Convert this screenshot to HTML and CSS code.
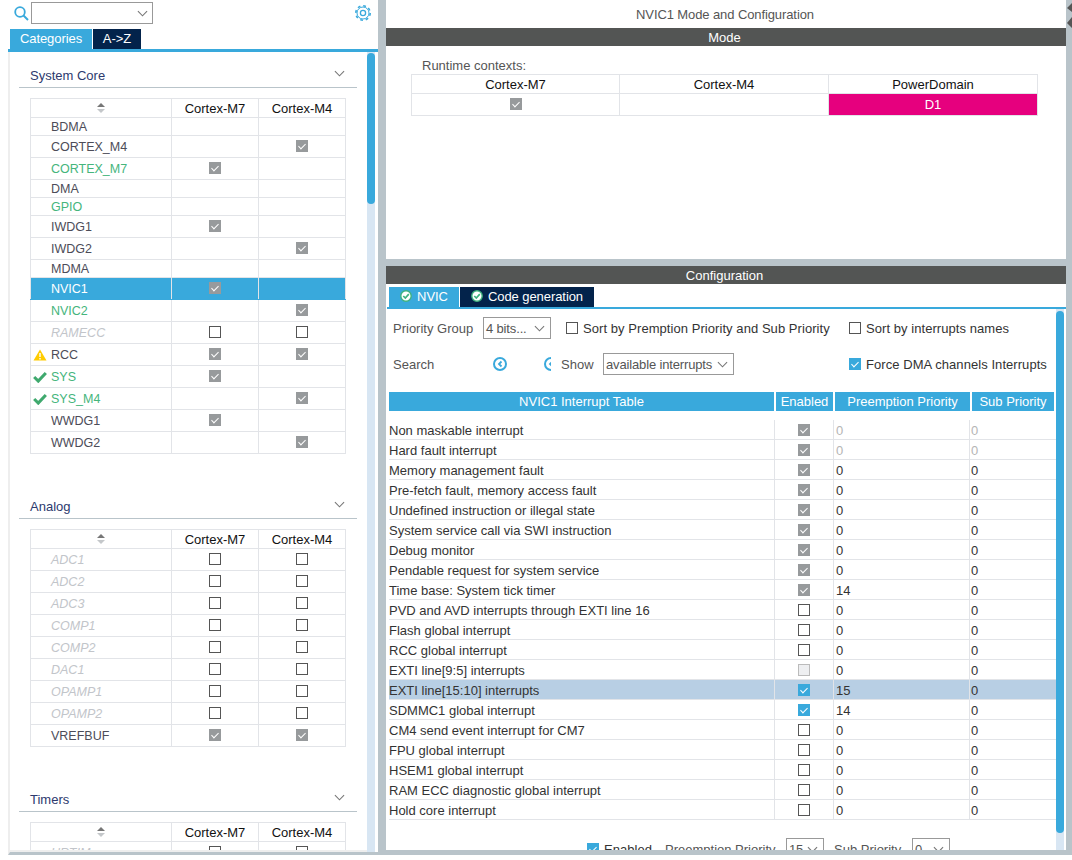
FILE: index.html
```html
<!DOCTYPE html>
<html lang="en">
<head>
    <meta charset="UTF-8">
    <title>NVIC1 Mode and Configuration</title>
    <link rel="stylesheet" href="styles.css">
</head>
<body>
    <svg class="defs" width="0" height="0">
        <symbol id="chev" viewBox="0 0 12 7"><path d="M1 1l5 5 5-5" fill="none" stroke="currentColor" stroke-width="1.2"/></symbol>
        <symbol id="sort" viewBox="0 0 8 10"><path d="M4 0l4 4H0z" fill="#777"/><path d="M4 10l4-4H0z" fill="#c4c7ca"/></symbol>
        <symbol id="ok" viewBox="0 0 12 10"><path d="M1 5l3.5 3.5L11 1.500" fill="none" stroke="#3fa96e" stroke-width="2.6"/></symbol>
        <symbol id="back" viewBox="0 0 14 14"><circle cx="7" cy="7" r="6" fill="none" stroke="#39a9dc" stroke-width="2"/><path d="M8.500 4.500L6 7l2.500 2.500" fill="none" stroke="#39a9dc" stroke-width="1.800"/></symbol>
        <symbol id="tabok" viewBox="0 0 12 12"><circle cx="6" cy="6" r="5.200" fill="#fff" stroke="#3fb27f" stroke-width="1.400"/><path d="M3.300 6l2 2 3.500-3.800" fill="none" stroke="#3fb27f" stroke-width="1.700"/></symbol>
    </svg>

    <div class="app">
        <div class="left">
            <div class="search-row">
                <svg class="search-icon" width="15" height="15" viewBox="0 0 15 15"><circle cx="6" cy="6" r="4.800" fill="none" stroke="#39a9dc" stroke-width="1.800"/><path d="M9.500 9.500l4.500 4.500" stroke="#39a9dc" stroke-width="2"/></svg>
                <div class="sel sel-search"><span></span><svg class="chev"><use href="#chev"/></svg></div>
                <svg class="gear" width="18" height="18" viewBox="0 0 18 18">
                    <circle cx="9" cy="9" r="7.200" fill="none" stroke="#39a9dc" stroke-width="1.600" stroke-dasharray="2.800 2.850"/>
                    <circle cx="9" cy="9" r="6" fill="none" stroke="#39a9dc" stroke-width="1"/>
                    <circle cx="9" cy="9" r="2.600" fill="none" stroke="#39a9dc" stroke-width="1.300"/>
                </svg>
            </div>
            <div class="cat-tabs">
                <div class="tab tab-on tab-cat">Categories</div>
                <div class="tab tab-off tab-az">A-&gt;Z</div>
            </div>
            <div class="left-body">
                <div class="sections">
                    <div class="section">
                        <div class="sec-head"><span>System Core</span><svg class="chev"><use href="#chev"/></svg></div>
                        <table class="ip-table">
                            <tr class="head"><th><svg class="sort"><use href="#sort"/></svg></th><th>Cortex-M7</th><th>Cortex-M4</th></tr>
                            <tr class="short"><td class="name">BDMA</td><td></td><td></td></tr>
                            <tr><td class="name">CORTEX_M4</td><td></td><td><span class="chk on"></span></td></tr>
                            <tr><td class="name green">CORTEX_M7</td><td><span class="chk on"></span></td><td></td></tr>
                            <tr class="short"><td class="name">DMA</td><td></td><td></td></tr>
                            <tr class="short"><td class="name green">GPIO</td><td></td><td></td></tr>
                            <tr><td class="name">IWDG1</td><td><span class="chk on"></span></td><td></td></tr>
                            <tr><td class="name">IWDG2</td><td></td><td><span class="chk on"></span></td></tr>
                            <tr class="short"><td class="name">MDMA</td><td></td><td></td></tr>
                            <tr class="picked"><td class="name">NVIC1</td><td><span class="chk on"></span></td><td></td></tr>
                            <tr><td class="name green">NVIC2</td><td></td><td><span class="chk on"></span></td></tr>
                            <tr><td class="name off">RAMECC</td><td><span class="chk"></span></td><td><span class="chk"></span></td></tr>
                            <tr><td class="name"><svg class="status" width="14" height="12" viewBox="0 0 14 12"><path d="M7 .5L13.500 11.500H.5z" fill="#fc0"/><path d="M7 4v4M7 9v1.500" stroke="#fff" stroke-width="1.400"/></svg>RCC</td><td><span class="chk on"></span></td><td><span class="chk on"></span></td></tr>
                            <tr><td class="name green"><svg class="status" width="14" height="12"><use href="#ok"/></svg>SYS</td><td><span class="chk on"></span></td><td></td></tr>
                            <tr><td class="name green"><svg class="status" width="14" height="12"><use href="#ok"/></svg>SYS_M4</td><td></td><td><span class="chk on"></span></td></tr>
                            <tr><td class="name">WWDG1</td><td><span class="chk on"></span></td><td></td></tr>
                            <tr><td class="name">WWDG2</td><td></td><td><span class="chk on"></span></td></tr>
                        </table>
                    </div>
                    <div class="section">
                        <div class="sec-head"><span>Analog</span><svg class="chev"><use href="#chev"/></svg></div>
                        <table class="ip-table">
                            <tr class="head"><th><svg class="sort"><use href="#sort"/></svg></th><th>Cortex-M7</th><th>Cortex-M4</th></tr>
                            <tr><td class="name off">ADC1</td><td><span class="chk"></span></td><td><span class="chk"></span></td></tr>
                            <tr><td class="name off">ADC2</td><td><span class="chk"></span></td><td><span class="chk"></span></td></tr>
                            <tr><td class="name off">ADC3</td><td><span class="chk"></span></td><td><span class="chk"></span></td></tr>
                            <tr><td class="name off">COMP1</td><td><span class="chk"></span></td><td><span class="chk"></span></td></tr>
                            <tr><td class="name off">COMP2</td><td><span class="chk"></span></td><td><span class="chk"></span></td></tr>
                            <tr><td class="name off">DAC1</td><td><span class="chk"></span></td><td><span class="chk"></span></td></tr>
                            <tr><td class="name off">OPAMP1</td><td><span class="chk"></span></td><td><span class="chk"></span></td></tr>
                            <tr><td class="name off">OPAMP2</td><td><span class="chk"></span></td><td><span class="chk"></span></td></tr>
                            <tr><td class="name">VREFBUF</td><td><span class="chk on"></span></td><td><span class="chk on"></span></td></tr>
                        </table>
                    </div>
                    <div class="section">
                        <div class="sec-head"><span>Timers</span><svg class="chev"><use href="#chev"/></svg></div>
                        <table class="ip-table">
                            <tr class="head"><th><svg class="sort"><use href="#sort"/></svg></th><th>Cortex-M7</th><th>Cortex-M4</th></tr>
                            <tr><td class="name off">HRTIM</td><td><span class="chk"></span></td><td><span class="chk"></span></td></tr>
                        </table>
                    </div>
                </div>
                <div class="scroll"><div class="thumb thumb-left"></div></div>
            </div>
        </div>

        <div class="right">
            <div class="mode">
                <div class="title">NVIC1 Mode and Configuration</div>
                <div class="bar">Mode</div>
                <div class="runtime-label">Runtime contexts:</div>
                <table class="ctx-table">
                    <tr class="ctx-head"><th>Cortex-M7</th><th>Cortex-M4</th><th>PowerDomain</th></tr>
                    <tr class="ctx-row"><td><span class="chk on"></span></td><td></td><td class="pink">D1</td></tr>
                </table>
            </div>

            <div class="config">
                <div class="bar">Configuration</div>
                <div class="conf-tabs">
                    <div class="tab tab-on tab-nvic"><svg class="tabok"><use href="#tabok"/></svg>NVIC</div>
                    <div class="tab tab-off tab-code"><svg class="tabok"><use href="#tabok"/></svg>Code generation</div>
                </div>
                <div class="panel">
                    <div class="panel-main">
                        <div class="opts opts-first">
                            <span class="lbl lbl-group">Priority Group</span>
                            <div class="sel sel-bits"><span>4 bits...</span><svg class="chev"><use href="#chev"/></svg></div>
                            <div class="opt opt-sort"><span class="chk"></span>Sort by Premption Priority and Sub Priority</div>
                            <div class="opt"><span class="chk"></span>Sort by interrupts names</div>
                        </div>
                        <div class="opts opts-second">
                            <span class="lbl lbl-search">Search</span>
                            <svg class="nav-icon" width="14" height="14"><use href="#back"/></svg>
                            <div class="nav-clip"><svg class="nav-next" width="14" height="14"><use href="#back"/></svg></div>
                            <span class="lbl lbl-show">Show</span>
                            <div class="sel sel-show"><span>available interrupts</span><svg class="chev"><use href="#chev"/></svg></div>
                            <div class="opt opt-force"><span class="chk blue"></span>Force DMA channels Interrupts</div>
                        </div>

                        <div class="irq-head">
                            <div>NVIC1 Interrupt Table</div>
                            <div>Enabled</div>
                            <div>Preemption Priority</div>
                            <div>Sub Priority</div>
                        </div>
                        <div class="irq-body">
                            <div class="irq-row faint"><div>Non maskable interrupt</div><div><span class="chk on"></span></div><div>0</div><div>0</div></div>
                            <div class="irq-row faint"><div>Hard fault interrupt</div><div><span class="chk on"></span></div><div>0</div><div>0</div></div>
                            <div class="irq-row"><div>Memory management fault</div><div><span class="chk on"></span></div><div>0</div><div>0</div></div>
                            <div class="irq-row"><div>Pre-fetch fault, memory access fault</div><div><span class="chk on"></span></div><div>0</div><div>0</div></div>
                            <div class="irq-row"><div>Undefined instruction or illegal state</div><div><span class="chk on"></span></div><div>0</div><div>0</div></div>
                            <div class="irq-row"><div>System service call via SWI instruction</div><div><span class="chk on"></span></div><div>0</div><div>0</div></div>
                            <div class="irq-row"><div>Debug monitor</div><div><span class="chk on"></span></div><div>0</div><div>0</div></div>
                            <div class="irq-row"><div>Pendable request for system service</div><div><span class="chk on"></span></div><div>0</div><div>0</div></div>
                            <div class="irq-row"><div>Time base: System tick timer</div><div><span class="chk on"></span></div><div>14</div><div>0</div></div>
                            <div class="irq-row"><div>PVD and AVD interrupts through EXTI line 16</div><div><span class="chk"></span></div><div>0</div><div>0</div></div>
                            <div class="irq-row"><div>Flash global interrupt</div><div><span class="chk"></span></div><div>0</div><div>0</div></div>
                            <div class="irq-row"><div>RCC global interrupt</div><div><span class="chk"></span></div><div>0</div><div>0</div></div>
                            <div class="irq-row"><div>EXTI line[9:5] interrupts</div><div><span class="chk dim"></span></div><div>0</div><div>0</div></div>
                            <div class="irq-row picked-row"><div>EXTI line[15:10] interrupts</div><div><span class="chk blue"></span></div><div>15</div><div>0</div></div>
                            <div class="irq-row"><div>SDMMC1 global interrupt</div><div><span class="chk blue"></span></div><div>14</div><div>0</div></div>
                            <div class="irq-row"><div>CM4 send event interrupt for CM7</div><div><span class="chk"></span></div><div>0</div><div>0</div></div>
                            <div class="irq-row"><div>FPU global interrupt</div><div><span class="chk"></span></div><div>0</div><div>0</div></div>
                            <div class="irq-row"><div>HSEM1 global interrupt</div><div><span class="chk"></span></div><div>0</div><div>0</div></div>
                            <div class="irq-row"><div>RAM ECC diagnostic global interrupt</div><div><span class="chk"></span></div><div>0</div><div>0</div></div>
                            <div class="irq-row"><div>Hold core interrupt</div><div><span class="chk"></span></div><div>0</div><div>0</div></div>
                        </div>

                        <div class="opts opts-bottom">
                            <div class="opt opt-enabled"><span class="chk blue"></span>Enabled</div>
                            <span class="lbl lbl-pre">Preemption Priority</span>
                            <div class="sel sel-small"><span>15</span><svg class="chev"><use href="#chev"/></svg></div>
                            <span class="lbl lbl-sub">Sub Priority</span>
                            <div class="sel sel-small"><span>0</span><svg class="chev"><use href="#chev"/></svg></div>
                        </div>
                    </div>
                    <div class="scroll scroll-right"><div class="thumb thumb-right"></div></div>
                </div>
            </div>
        </div>

        <div class="edge">
            <svg width="6" height="28" viewBox="0 0 6 28"><path d="M6 0L1 5l5 4zM6 14L1 20l5 5z" fill="#555"/></svg>
        </div>
    </div>
</body>
</html>
```

FILE: styles.css
```css
/* Page frame */
body {
    margin: 0;
    background-color: #fff;
    font-family: "Liberation Sans", Arial, sans-serif;
    font-size: 13px;
    color: #333;
}
.defs {
    position: absolute;
}
.app {
    display: flex;
    width: 1072px;
    height: 855px;
    overflow: hidden;
    background-color: #b9c4ca;
}
.edge {
    padding-top: 3px;
}

/* Left column */
.left {
    display: flex;
    flex-direction: column;
    width: 378px;
    flex-shrink: 0;
    background-color: #fff;
}
.search-row {
    display: flex;
    align-items: center;
    height: 26px;
    padding-left: 14px;
}
.search-icon {
    margin-right: 2px;
}
.gear {
    margin-left: 201px;
}
.sel {
    display: flex;
    align-items: center;
    justify-content: space-between;
    box-sizing: border-box;
    height: 22px;
    border: 1px solid #999;
    padding: 0 5px 0 2px;
    color: #555;
    letter-spacing: -0.15px;
    white-space: nowrap;
}
.sel-search {
    width: 122px;
    padding-right: 4px;
}
.chev {
    width: 11px;
    height: 7px;
    color: #777;
    flex-shrink: 0;
}
.cat-tabs {
    display: flex;
    height: 20px;
    margin-top: 3px;
    margin-left: 8px;
    padding-left: 2px;
    border-bottom: 3px solid #39a9dc;
}
.tab {
    display: flex;
    align-items: center;
    justify-content: center;
    box-sizing: border-box;
    padding-bottom: 2px;
    letter-spacing: -0.07px;
    color: #fff;
}
.tab-on {
    background-color: #39a9dc;
}
.tab-off {
    background-color: #03234b;
}
.tab-cat {
    width: 82px;
    margin-right: 1px;
}
.tab-az {
    width: 48px;
}
.left-body {
    display: flex;
    flex: 1;
    min-height: 0;
    margin-left: 8px;
    border-left: 2px solid #eee;
    border-bottom: 3px solid #b9c4ca;
}
.sections {
    flex: 1;
    overflow: hidden;
    border-bottom: 2px solid #eee;
}
.section {
    padding-left: 9px;
    padding-top: 14px;
    margin-bottom: 29px;
}
.sec-head {
    display: flex;
    justify-content: space-between;
    box-sizing: border-box;
    width: 338px;
    height: 22px;
    padding: 0 12px 0 11px;
    border-bottom: 1px solid #b9c4ca;
    color: #2d3a6e;
    line-height: 20px;
}
.sec-head .chev {
    margin-top: 4px;
}
.ip-table {
    width: 316px;
    margin: 10px 0 0 11px;
    border-collapse: collapse;
    table-layout: fixed;
}
.ip-table th,
.ip-table td {
    box-sizing: border-box;
    height: 22px;
    padding: 0;
    border: 1px solid #e2e4e8;
    text-align: center;
    font-weight: normal;
}
.ip-table th:first-child {
    width: 141px;
}
.ip-table th:nth-child(2) {
    width: 87px;
}
.ip-table .head th {
    height: 19px;
    color: #111;
}
.ip-table .short td {
    height: 18px;
}
.ip-table .name {
    padding-left: 20px;
    text-align: left;
    font-size: 12.5px;
    color: #4c4c58;
    white-space: nowrap;
}
.ip-table .green {
    color: #45b57c;
}
.ip-table .off {
    color: #c2c5ca;
    font-style: italic;
}
.ip-table .picked td {
    background-color: #39a9dc;
    color: #fff;
    border-top-color: #39a9dc;
    border-bottom-color: #39a9dc;
}
.sort {
    display: block;
    width: 8px;
    height: 10px;
    margin: 0 auto;
}
.status {
    margin-left: -18px;
    margin-right: 4px;
    vertical-align: -2px;
}

/* Checkboxes */
.chk {
    display: inline-block;
    position: relative;
    box-sizing: border-box;
    width: 12px;
    height: 12px;
    border: 1px solid #555;
    vertical-align: middle;
    background-color: #fff;
}
td > .chk {
    display: block;
    margin: 0 auto 1px;
}
.chk.on,
.chk.blue {
    border: none;
    background-color: #979a9c;
}
.chk.blue {
    background-color: #39a9dc;
}
.chk.dim {
    border-color: #bbb;
    background-color: #eeeff1;
}
.chk.on::after,
.chk.blue::after {
    content: "";
    position: absolute;
    left: 4px;
    top: 2px;
    width: 3px;
    height: 6px;
    border-right: 1.5px solid #fff;
    border-bottom: 1.5px solid #fff;
    transform: rotate(45deg);
}

/* Scrollbars */
.scroll {
    width: 8px;
    margin-right: 3px;
    padding-top: 1px;
    background-color: #d8e6f3;
    flex-shrink: 0;
}
.thumb {
    background-color: #39a9dc;
    border-radius: 4px;
}
.thumb-left {
    height: 151px;
}

/* Right column */
.right {
    display: flex;
    flex-direction: column;
    width: 680px;
    flex-shrink: 0;
    margin-left: 8px;
}
.mode {
    height: 259px;
    background-color: #fff;
}
.title {
    height: 28px;
    padding-right: 2px;
    line-height: 29px;
    letter-spacing: -0.1px;
    text-align: center;
    color: #555;
}
.bar {
    height: 18px;
    padding-right: 3px;
    line-height: 19px;
    background-color: #535554;
    color: #fff;
    text-align: center;
}
.runtime-label {
    margin: 11px 0 0 36px;
    height: 17px;
    line-height: 17px;
    color: #555;
}
.ctx-table {
    width: 627px;
    margin-left: 25px;
    border-collapse: collapse;
    table-layout: fixed;
}
.ctx-table th,
.ctx-table td {
    box-sizing: border-box;
    padding: 0;
    border: 1px solid #e2e4e8;
    text-align: center;
    font-weight: normal;
}
.ctx-table th:first-child {
    width: 208px;
}
.ctx-table th:nth-child(2) {
    width: 209px;
}
.ctx-head th {
    height: 19px;
    color: #111;
}
.ctx-row td {
    height: 22px;
}
.ctx-table .pink {
    background-color: #e6007e;
    color: #fff;
}
.config {
    display: flex;
    flex-direction: column;
    flex: 1;
    min-height: 0;
    margin-top: 7px;
    background-color: #fff;
    border-bottom: 5px solid #b9c4ca;
}
.conf-tabs {
    display: flex;
    height: 20px;
    padding: 3px 2px 0 2px;
    margin-left: 1px;
    border-bottom: 2px solid #39a9dc;
}
.tab-nvic {
    width: 70px;
    margin-right: 1px;
}
.tab-code {
    width: 134px;
}
.tabok {
    width: 12px;
    height: 12px;
    margin-right: 5px;
}
.panel {
    display: flex;
    flex: 1;
    min-height: 0;
    margin-left: 1px;
}
.panel-main {
    flex: 1;
    min-width: 0;
    overflow: hidden;
    padding-left: 2px;
}
.scroll-right {
    margin-right: 2px;
    padding-top: 2px;
}
.thumb-right {
    height: 522px;
}

/* Option rows */
.opts {
    display: flex;
    align-items: center;
    height: 22px;
    white-space: nowrap;
}
.opts-first {
    margin-top: 8px;
}
.opts-second {
    margin-top: 14px;
}
.lbl {
    color: #555;
}
.lbl-group {
    width: 90px;
    padding-left: 4px;
}
.lbl-search {
    width: 100px;
    padding-left: 4px;
}
.opt {
    display: flex;
    align-items: center;
    letter-spacing: 0.06px;
}
.opt .chk {
    margin-right: 5px;
}
.opt-sort {
    width: 283px;
    margin-left: 15px;
}
.sel-bits {
    width: 68px;
}
.nav-clip {
    width: 7px;
    height: 14px;
    margin-left: 37px;
    overflow: hidden;
}
.nav-next {
    display: block;
}
.lbl-show {
    width: 42px;
    margin-left: 10px;
}
.sel-show {
    width: 131px;
}
.opt-force {
    margin-left: 115px;
}
.opts-bottom {
    margin-top: 18px;
}
.opt-enabled {
    width: 78px;
    margin-left: 198px;
}
.lbl-pre {
    width: 121px;
}
.sel-small {
    width: 38px;
}
.lbl-sub {
    width: 78px;
    margin-left: 10px;
}

/* Interrupt table */
.irq-head {
    display: grid;
    grid-template-columns: 385px 57px 135px 82px;
    column-gap: 2px;
    height: 18px;
    margin-top: 17px;
    line-height: 19px;
    text-align: center;
    color: #fff;
}
.irq-head div {
    background-color: #39a9dc;
}
.irq-body {
    margin-top: 10px;
}
.irq-row {
    display: grid;
    grid-template-columns: 386px 59px 136px 84px;
    height: 20px;
    box-sizing: border-box;
    border-bottom: 1px solid #e2e4e8;
    line-height: 21px;
}
.irq-row div {
    box-sizing: border-box;
    height: 19px;
    border-right: 1px solid #e2e4e8;
    white-space: nowrap;
}
.irq-row div:nth-child(2) {
    display: flex;
    align-items: center;
    justify-content: center;
    padding-top: 1px;
}
.irq-row div:nth-child(3) {
    padding-left: 2px;
}
.irq-row div:nth-child(4) {
    padding-left: 1px;
    border-right: none;
}
.irq-row.faint div:nth-child(3),
.irq-row.faint div:nth-child(4) {
    color: #b5b5b5;
}
.picked-row {
    background-color: #b8cfe4;
}
```
